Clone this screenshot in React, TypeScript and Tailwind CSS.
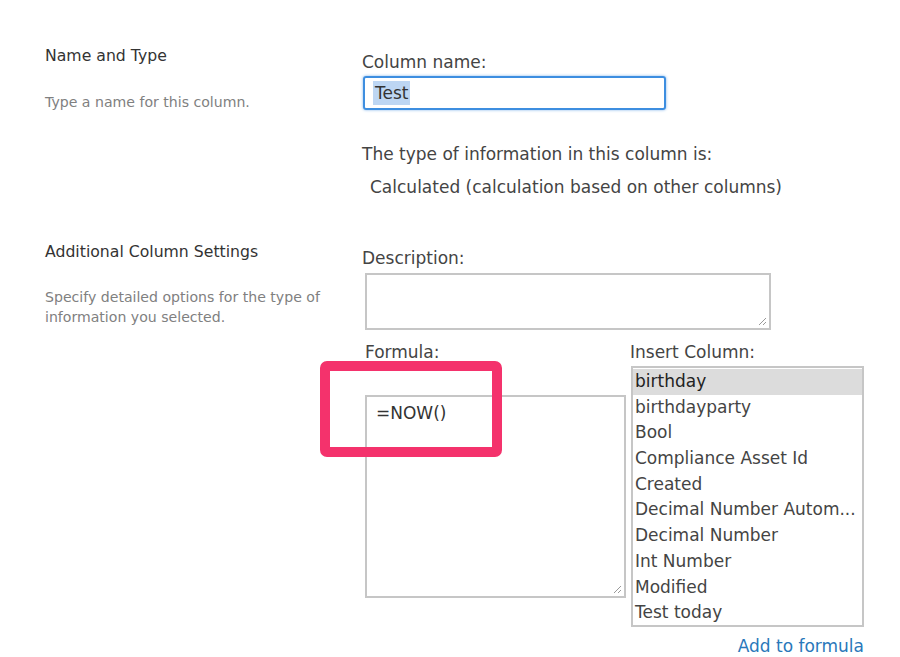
import React from "react";

const items = [
  "birthday",
  "birthdayparty",
  "Bool",
  "Compliance Asset Id",
  "Created",
  "Decimal Number Autom...",
  "Decimal Number",
  "Int Number",
  "Modified",
  "Test today",
];

function Grip() {
  return (
    <svg width="10" height="10" viewBox="0 0 10 10" className="absolute right-[2px] bottom-[2px]">
      <line x1="9" y1="2" x2="2" y2="9" stroke="#999" strokeWidth="1" />
      <line x1="9" y1="6" x2="6" y2="9" stroke="#999" strokeWidth="1" />
    </svg>
  );
}

export default function App() {
  return (
    <div
      className="w-[900px] h-[657px] bg-white overflow-hidden relative"
      style={{ fontFamily: '"DejaVu Sans", Verdana, sans-serif' }}
    >
      {/* Section 1 */}
      <div className="flex pt-[46px] pl-[45px]">
        <div className="w-[317px]">
          <div className="text-[15.7px] leading-[20px] text-[#333]">Name and Type</div>
          <div className="mt-[27px] text-[14.1px] leading-[18px] text-[#808080]">Type a name for this column.</div>
        </div>
        <div className="flex-1 pt-[5px]">
          <div className="text-[17px] leading-[22px] text-[#444]">Column name:</div>
          <div className="mt-[3px] ml-[1px] w-[303px] h-[34px] border-2 border-[#3d8ee0] rounded-[3px] shadow-[0_0_3px_#7fb2ea] flex items-center pl-[8px]">
            <span className="bg-[#bdd6f3] text-[17px] leading-[24px] text-[#333] px-[2px]">Test</span>
          </div>
          <div className="mt-[33px] text-[17px] leading-[22px] text-[#444]">The type of information in this column is:</div>
          <div className="mt-[11px] ml-[8px] text-[17px] leading-[22px] text-[#444]">Calculated (calculation based on other columns)</div>
        </div>
      </div>

      {/* Section 2 */}
      <div className="flex pt-[44px] pl-[45px]">
        <div className="w-[317px]">
          <div className="text-[15.7px] leading-[20px] text-[#333]">Additional Column Settings</div>
          <div className="mt-[25px] text-[14.1px] leading-[20px] text-[#808080]">
            Specify detailed options for the type of
            <br />
            information you selected.
          </div>
        </div>
        <div className="flex-1 pt-[5px]">
          <div className="text-[17px] leading-[22px] text-[#444]">Description:</div>
          <div className="relative mt-[4px] ml-[3px] w-[406px] h-[57px] border-2 border-[#c6c6c6]">
            <Grip />
          </div>
          <div className="flex mt-[11px] ml-[3px]">
            <div className="w-[265px] relative">
              <div className="text-[17px] leading-[22px] text-[#444]">Formula:</div>
              <div className="relative mt-[32px] w-[261px] h-[203px] border-2 border-[#c6c6c6]">
                <div className="pl-[9px] pt-[5px] text-[17px] leading-[22px] text-[#333]">=NOW()</div>
                <Grip />
              </div>
              <div className="absolute left-[-45px] top-[20px] w-[182px] h-[96px] border-[10px] border-[#f4326c] rounded-[7px]" />
            </div>
            <div>
              <div className="text-[17px] leading-[22px] text-[#444]">Insert Column:</div>
              <div className="mt-[3px] ml-[1px] w-[233px] h-[261px] border-2 border-[#c6c6c6] pt-[1px]">
                {items.map((it, i) => (
                  <div
                    key={it}
                    className={
                      "h-[25.7px] pl-[2px] text-[17px] leading-[25.7px] whitespace-nowrap " +
                      (i === 0 ? "bg-[#dcdcdc] text-[#222]" : "text-[#444]")
                    }
                  >
                    {it}
                  </div>
                ))}
              </div>
              <div className="mt-[8px] w-[234px] text-right text-[17px] leading-[22px] text-[#2a78ba]">Add to formula</div>
            </div>
          </div>
        </div>
      </div>
    </div>
  );
}
